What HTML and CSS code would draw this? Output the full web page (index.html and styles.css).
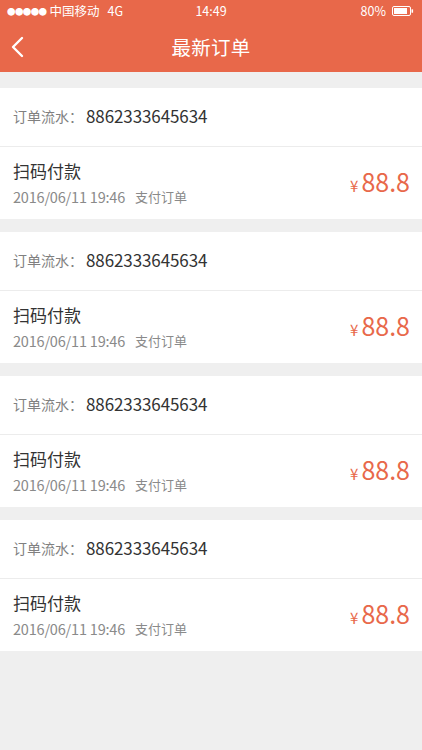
FILE: index.html
```html
<!DOCTYPE html>
<html lang="zh-CN">
<head>
<meta charset="utf-8">
<title>最新订单</title>
<link rel="stylesheet" href="styles.css">
</head>
<body>
<header class="top">
  <div class="status">
    <div class="status-left"><span class="dots">●●●●●</span><span>中国移动</span><span class="net">4G</span></div>
    <div class="status-time">14:49</div>
    <div class="status-right"><span>80%</span>
      <svg class="battery" width="22" height="10" viewBox="0 0 22 10"><rect x="0.5" y="0.5" width="18" height="9" rx="1.5" fill="none" stroke="#fff" stroke-width="1"/><rect x="2" y="2" width="13" height="6" fill="#fff"/><rect x="19.5" y="3.2" width="1.6" height="3.6" rx="0.6" fill="#fff"/></svg>
    </div>
  </div>
  <nav class="navbar">
    <svg class="back" width="14" height="22" viewBox="0 0 14 22"><polyline points="11,2 2,11 11,20" fill="none" stroke="#fff" stroke-width="2.4" stroke-linecap="round" stroke-linejoin="round"/></svg>
    <h1 class="title">最新订单</h1>
  </nav>
</header>
<main class="list">
  <section class="card">
    <div class="serial"><span class="label">订单流水：</span><span class="num">8862333645634</span></div>
    <div class="detail">
      <div class="info"><div class="name">扫码付款</div><div class="meta"><span class="date">2016/06/11 19:46</span><span class="kind">支付订单</span></div></div>
      <div class="price"><span class="yen">¥</span><span class="amt">88.8</span></div>
    </div>
  </section>
  <section class="card">
    <div class="serial"><span class="label">订单流水：</span><span class="num">8862333645634</span></div>
    <div class="detail">
      <div class="info"><div class="name">扫码付款</div><div class="meta"><span class="date">2016/06/11 19:46</span><span class="kind">支付订单</span></div></div>
      <div class="price"><span class="yen">¥</span><span class="amt">88.8</span></div>
    </div>
  </section>
  <section class="card">
    <div class="serial"><span class="label">订单流水：</span><span class="num">8862333645634</span></div>
    <div class="detail">
      <div class="info"><div class="name">扫码付款</div><div class="meta"><span class="date">2016/06/11 19:46</span><span class="kind">支付订单</span></div></div>
      <div class="price"><span class="yen">¥</span><span class="amt">88.8</span></div>
    </div>
  </section>
  <section class="card">
    <div class="serial"><span class="label">订单流水：</span><span class="num">8862333645634</span></div>
    <div class="detail">
      <div class="info"><div class="name">扫码付款</div><div class="meta"><span class="date">2016/06/11 19:46</span><span class="kind">支付订单</span></div></div>
      <div class="price"><span class="yen">¥</span><span class="amt">88.8</span></div>
    </div>
  </section>
</main>
</body>
</html>
```
FILE: styles.css
```css
* { box-sizing: border-box; margin: 0; padding: 0; }
html, body { height: 100%; }
body {
  background: #efefef;
  font-family: "Noto Sans CJK SC", "Noto Sans", sans-serif;
  color: #333;
  width: 422px;
  min-height: 750px;
}
.top { background: #e8684a; color: #fff; }
.status {
  height: 22px;
  display: flex;
  align-items: center;
  justify-content: space-between;
  padding: 0 8px 0 7px;
  font-size: 12.5px;
  line-height: 22px;
  position: relative;
}
.status-left { display: flex; align-items: center; gap: 1px; }
.dots { font-size: 8.5px; letter-spacing: -0.6px; margin-right: 2px; }
.net { margin-left: 7px; }
.status-time {
  position: absolute;
  left: 0; right: 0;
  text-align: center;
  pointer-events: none;
}
.status-right { display: flex; align-items: center; gap: 6px; }
.battery { display: block; }
.navbar {
  height: 50px;
  display: flex;
  align-items: center;
  justify-content: center;
  position: relative;
}
.back { position: absolute; left: 11px; top: 14px; }
.title { font-size: 19.5px; font-weight: 400; line-height: 26px; letter-spacing: 0.3px; }
.list {
  padding-top: 16px;
  display: flex;
  flex-direction: column;
  gap: 13px;
}
.card { background: #fff; }
.serial {
  height: 59px;
  display: flex;
  align-items: center;
  padding-left: 13px;
  padding-bottom: 3px;
  border-bottom: 1px solid #ececec;
}
.label { font-size: 14px; color: #808080; line-height: 20px; }
.num { font-size: 17px; color: #333; line-height: 24px; margin-left: 3px; letter-spacing: -0.1px; }
.detail {
  height: 72px;
  display: flex;
  align-items: center;
  justify-content: space-between;
  padding: 0 12px 0 13px;
}
.info { display: flex; flex-direction: column; gap: 4px; }
.name { font-size: 17px; line-height: 24px; color: #333; }
.meta { font-size: 14.5px; line-height: 20px; color: #8a8a8a; display: flex; }
.date { letter-spacing: -0.2px; }
.kind { font-size: 13px; margin-left: 10px; }
.price { color: #e8684a; display: flex; align-items: baseline; padding-bottom: 4px; }
.yen { font-size: 15px; margin-right: 3px; }
.amt { font-size: 25px; line-height: 30px; }
```
